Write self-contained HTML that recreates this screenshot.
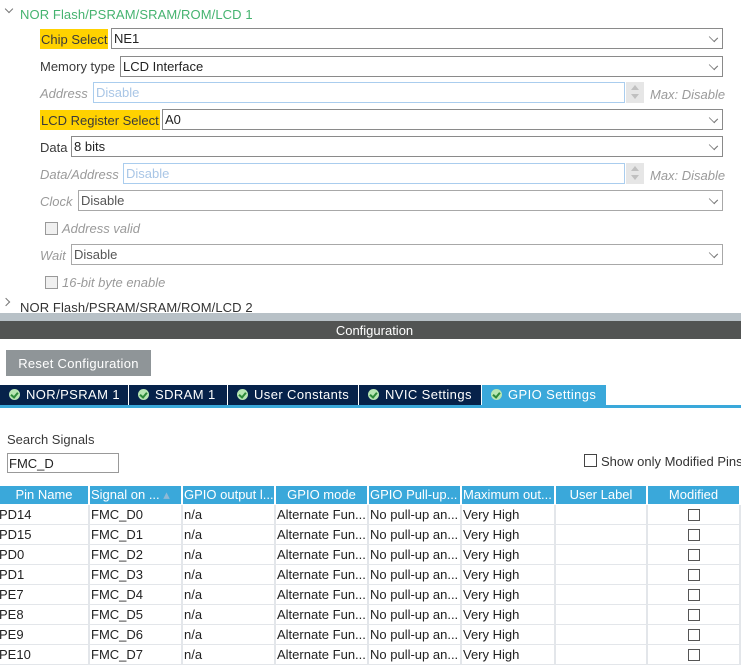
<!DOCTYPE html>
<html><head><meta charset="utf-8"><style>
*{box-sizing:border-box;margin:0;padding:0}
body{width:741px;height:664px;overflow:hidden;background:#fff;font-family:"Liberation Sans",sans-serif;font-size:13px;color:#333;position:relative}
.a{position:absolute;white-space:nowrap}
.lbl{position:absolute;height:20px;line-height:20px;color:#3a3a3a}
.hl{background:#ffd200}
.dis{color:#9a9a9a;font-style:italic}
.box{position:absolute;height:21px;border:1px solid #8a8a8a;line-height:20px;padding-left:2px;color:#222;background:#fff}
.box.d{border-color:#aacdee;color:#a9c6e6}
.box.g{color:#555;border-color:#a8a8a8}
.chev{position:absolute;right:5px;top:5px;width:7px;height:7px;border-right:1px solid #777;border-bottom:1px solid #777;transform:rotate(45deg) scale(1.1,0.8)}
.spin{position:absolute;width:18px;height:21px;background:#e6e6e6}
.spin:before{content:"";position:absolute;left:5px;top:3px;border:4px solid transparent;border-bottom:5px solid #c0c0c0;border-top:0}
.spin:after{content:"";position:absolute;left:5px;top:12px;border:4px solid transparent;border-top:5px solid #c0c0c0;border-bottom:0}
.cb{position:absolute;width:13px;height:13px;border:1px solid #999;background:#f0f0f0}
.tab{position:absolute;top:385px;height:20px;background:#06224a;color:#fff;line-height:20px;font-size:13px;letter-spacing:.4px;border-right:1px solid #fff}
.tab i{display:inline-block;width:11px;height:11px;border-radius:50%;background:#b7e6b2;margin:0 6px 0 9px;vertical-align:-1px;position:relative}
.tab i:after{content:"";position:absolute;left:3px;top:2px;width:3px;height:5px;border-right:2px solid #2d8a3a;border-bottom:2px solid #2d8a3a;transform:rotate(40deg)}
table{position:absolute;left:0;top:486px;border-collapse:separate;border-spacing:0;table-layout:fixed;width:741px}
th{background:#3aa8da;color:#fff;font-weight:normal;height:18px;line-height:18px;border-right:2px solid #fff;border-bottom:1px solid #fff;overflow:hidden;white-space:nowrap;text-align:center;font-size:13px}
td{height:20px;line-height:19px;border-right:2px solid #e3e6ea;border-bottom:1px solid #e3e6ea;white-space:nowrap;overflow:hidden;padding-left:1px;color:#222}
td:first-child{padding-left:0;text-indent:-1px}
th.l{text-align:left;padding-left:1px}
.mb{display:inline-block;width:12px;height:12px;border:1px solid #555;vertical-align:-2px}
</style></head><body>
<div class="a" style="left:6px;top:6px;width:6px;height:6px;border-right:1px solid #777;border-bottom:1px solid #777;transform:rotate(45deg)"></div>
<div class="a" style="left:20px;top:7px;color:#45b36f;font-size:13px;letter-spacing:.1px">NOR Flash/PSRAM/SRAM/ROM/LCD 1</div>

<div class="lbl hl" style="left:40px;top:29px;padding:0 1px;line-height:21px">Chip Select</div>
<div class="box" style="left:111px;top:28px;width:612px">NE1<span class="chev"></span></div>

<div class="lbl" style="left:40px;top:56px;line-height:21px">Memory type</div>
<div class="box" style="left:120px;top:56px;width:603px">LCD Interface<span class="chev"></span></div>

<div class="lbl dis" style="left:40px;top:83px;line-height:21px">Address</div>
<div class="box d" style="left:93px;top:82px;width:532px">Disable</div>
<div class="spin" style="left:626px;top:82px"></div>
<div class="a dis" style="left:650px;top:87px">Max: Disable</div>

<div class="lbl hl" style="left:40px;top:110px;padding:0 1px;line-height:21px">LCD Register Select</div>
<div class="box" style="left:162px;top:109px;width:561px">A0<span class="chev"></span></div>

<div class="lbl" style="left:40px;top:137px;line-height:21px">Data</div>
<div class="box" style="left:71px;top:136px;width:652px">8 bits<span class="chev"></span></div>

<div class="lbl dis" style="left:40px;top:164px;line-height:21px">Data/Address</div>
<div class="box d" style="left:123px;top:163px;width:502px">Disable</div>
<div class="spin" style="left:626px;top:163px"></div>
<div class="a dis" style="left:650px;top:168px">Max: Disable</div>

<div class="lbl dis" style="left:40px;top:191px;line-height:21px">Clock</div>
<div class="box g" style="left:78px;top:190px;width:645px">Disable<span class="chev"></span></div>

<div class="cb" style="left:45px;top:222px"></div>
<div class="lbl dis" style="left:62px;top:218px;line-height:21px">Address valid</div>

<div class="lbl dis" style="left:40px;top:245px;line-height:21px">Wait</div>
<div class="box g" style="left:71px;top:244px;width:652px">Disable<span class="chev"></span></div>

<div class="cb" style="left:45px;top:276px"></div>
<div class="lbl dis" style="left:62px;top:272px;line-height:21px">16-bit byte enable</div>

<div class="a" style="left:3px;top:299px;width:6px;height:6px;border-right:1px solid #777;border-bottom:1px solid #777;transform:rotate(-45deg)"></div>
<div class="a" style="left:20px;top:300px;color:#333;letter-spacing:.1px">NOR Flash/PSRAM/SRAM/ROM/LCD 2</div>

<div class="a" style="left:0;top:313px;width:741px;height:8px;background:#b8c1c7"></div>
<div class="a" style="left:0;top:321px;width:741px;height:18px;background:#525453;color:#fff;text-align:center;line-height:20px;padding-left:8px">Configuration</div>

<div class="a" style="left:6px;top:350px;width:145px;height:26px;background:#8f9598;color:#fff;text-align:center;line-height:27px;letter-spacing:.3px">Reset Configuration</div>

<div class="a" style="left:0;top:385px;width:741px;height:20px;background:#fff"></div>
<div class="tab" style="left:0;width:129px"><i></i>NOR/PSRAM 1</div>
<div class="tab" style="left:129px;width:99px"><i></i>SDRAM 1</div>
<div class="tab" style="left:228px;width:131px"><i></i>User Constants</div>
<div class="tab" style="left:359px;width:123px"><i></i>NVIC Settings</div>
<div class="tab" style="left:482px;width:124px;background:#3aa8da;border:0"><i></i>GPIO Settings</div>
<div class="a" style="left:0;top:405px;width:741px;height:3px;background:#3aa8da"></div>

<div class="a" style="left:7px;top:432px;color:#3a3a3a">Search Signals</div>
<div class="a" style="left:7px;top:453px;width:112px;height:20px;border:1px solid #999;line-height:19px;padding-left:1px;color:#222">FMC_D</div>

<div class="a" style="left:584px;top:454px;width:13px;height:13px;border:1px solid #444"></div>
<div class="a" style="left:601px;top:454px;color:#333">Show only Modified Pins</div>

<table>
<colgroup><col style="width:90px"><col style="width:93px"><col style="width:93px"><col style="width:93px"><col style="width:93px"><col style="width:94px"><col style="width:92px"><col style="width:93px"></colgroup>
<tr><th>Pin Name</th><th class="l">Signal on ... <span style="color:#8fb9d5">&#x25B4;</span></th><th class="l">GPIO output l...</th><th>GPIO mode</th><th class="l">GPIO Pull-up...</th><th class="l">Maximum out...</th><th>User Label</th><th>Modified</th></tr>
<tr><td>PD14</td><td>FMC_D0</td><td>n/a</td><td>Alternate Fun...</td><td>No pull-up an...</td><td>Very High</td><td></td><td style="text-align:center"><span class="mb"></span></td></tr>
<tr><td>PD15</td><td>FMC_D1</td><td>n/a</td><td>Alternate Fun...</td><td>No pull-up an...</td><td>Very High</td><td></td><td style="text-align:center"><span class="mb"></span></td></tr>
<tr><td>PD0</td><td>FMC_D2</td><td>n/a</td><td>Alternate Fun...</td><td>No pull-up an...</td><td>Very High</td><td></td><td style="text-align:center"><span class="mb"></span></td></tr>
<tr><td>PD1</td><td>FMC_D3</td><td>n/a</td><td>Alternate Fun...</td><td>No pull-up an...</td><td>Very High</td><td></td><td style="text-align:center"><span class="mb"></span></td></tr>
<tr><td>PE7</td><td>FMC_D4</td><td>n/a</td><td>Alternate Fun...</td><td>No pull-up an...</td><td>Very High</td><td></td><td style="text-align:center"><span class="mb"></span></td></tr>
<tr><td>PE8</td><td>FMC_D5</td><td>n/a</td><td>Alternate Fun...</td><td>No pull-up an...</td><td>Very High</td><td></td><td style="text-align:center"><span class="mb"></span></td></tr>
<tr><td>PE9</td><td>FMC_D6</td><td>n/a</td><td>Alternate Fun...</td><td>No pull-up an...</td><td>Very High</td><td></td><td style="text-align:center"><span class="mb"></span></td></tr>
<tr><td>PE10</td><td>FMC_D7</td><td>n/a</td><td>Alternate Fun...</td><td>No pull-up an...</td><td>Very High</td><td></td><td style="text-align:center"><span class="mb"></span></td></tr>
</table>
</body></html>
